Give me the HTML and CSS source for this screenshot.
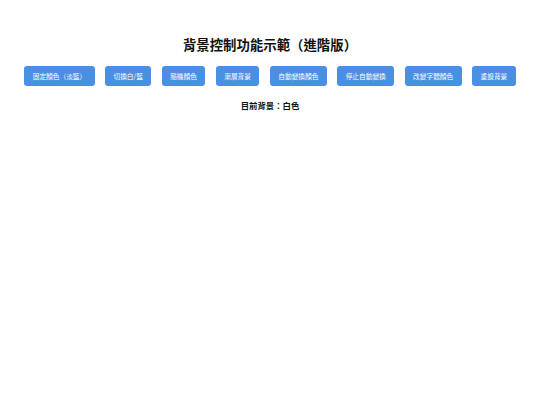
FILE: index.html
```html
<!DOCTYPE html>
<html lang="zh-Hant">
<head>
  <meta charset="UTF-8" />
  <meta name="viewport" content="width=device-width, initial-scale=1.0"/>
  <title>背景控制功能示範（進階版）</title>
  <link rel="stylesheet" href="styles.css">
</head>
<body>
  <h1>背景控制功能示範（進階版）</h1>

  <div class="controls">
    <button id="btn-fixed">固定顏色（淡藍）</button>
    <button id="btn-toggle">切換白/藍</button>
    <button id="btn-random">隨機顏色</button>
    <button id="btn-gradient">漸層背景</button>
    <button id="btn-auto">自動變換顏色</button>
    <button id="btn-stop">停止自動變換</button>
    <button id="btn-font">改變字體顏色</button>
    <button id="btn-reset">重設背景</button>
  </div>

  <p id="status">目前背景：白色</p>

  <script>
    const status = document.getElementById('status');
    let timer = null;

    function setBg(value, label) {
      document.body.style.background = value;
      status.textContent = '目前背景：' + label;
    }

    function randomColor() {
      return '#' + Math.floor(Math.random() * 0xffffff).toString(16).padStart(6, '0');
    }

    document.getElementById('btn-fixed').addEventListener('click', () => setBg('#d6ecff', '淡藍'));

    document.getElementById('btn-toggle').addEventListener('click', () => {
      if (status.textContent.endsWith('白色')) setBg('#4a90e2', '藍色');
      else setBg('#ffffff', '白色');
    });

    document.getElementById('btn-random').addEventListener('click', () => {
      const c = randomColor();
      setBg(c, c);
    });

    document.getElementById('btn-gradient').addEventListener('click', () => {
      setBg('linear-gradient(135deg, #a1c4fd, #c2e9fb)', '漸層');
    });

    document.getElementById('btn-auto').addEventListener('click', () => {
      if (timer) return;
      timer = setInterval(() => {
        const c = randomColor();
        setBg(c, c);
      }, 1000);
    });

    document.getElementById('btn-stop').addEventListener('click', () => {
      clearInterval(timer);
      timer = null;
    });

    document.getElementById('btn-font').addEventListener('click', () => {
      document.body.style.color = randomColor();
    });

    document.getElementById('btn-reset').addEventListener('click', () => {
      clearInterval(timer);
      timer = null;
      document.body.style.color = '';
      setBg('#ffffff', '白色');
    });
  </script>
</body>
</html>
```

FILE: styles.css
```css
* {
  box-sizing: border-box;
}

html, body {
  margin: 0;
  padding: 0;
  height: 100%;
}

body {
  font-family: 'Noto Sans CJK TC', 'Noto Sans', sans-serif;
  background-color: #fff;
  color: #111;
  text-align: center;
  padding-top: 34px;
}

h1 {
  font-size: 13.4px;
  font-weight: bold;
  margin: 0 0 12px 0;
  line-height: 20px;
}

.controls {
  display: flex;
  justify-content: center;
  flex-wrap: wrap;
  gap: 10.3px;
  padding: 0 20px;
}

.controls button {
  height: 20px;
  padding: 0 8.5px;
  font-family: inherit;
  font-size: 6.7px;
  color: #fff;
  background-color: #4a90e2;
  border: none;
  border-radius: 3px;
  cursor: pointer;
}

.controls button:hover {
  background-color: #357abd;
}

#status {
  font-size: 8.4px;
  font-weight: bold;
  margin: 13px 0 0 0;
  line-height: 12px;
}
```
